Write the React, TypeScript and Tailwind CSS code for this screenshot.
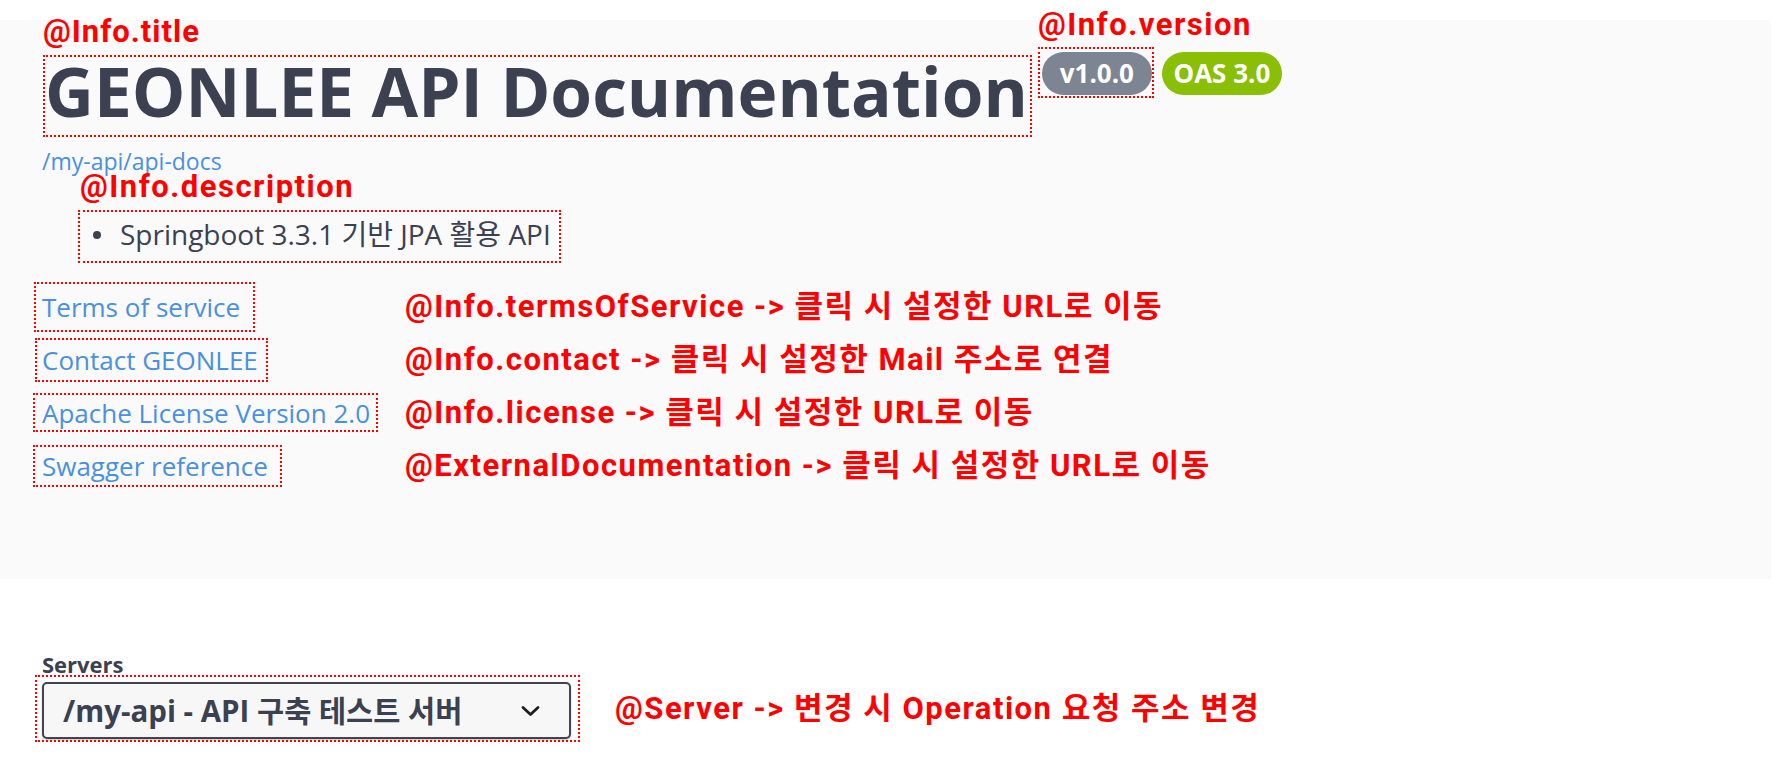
import React from "react";

const red =
  "font-[family-name:'Roboto','Noto_Sans_CJK_KR',sans-serif] font-bold text-[31px] leading-[26px] tracking-[1.5px] text-[#ff0000] whitespace-nowrap";

const links = [
  {
    text: "Terms of service",
    box: "h-[50px] ml-0 pl-[6px] pr-[13px]",
    note: "@Info.termsOfService -> 클릭 시 설정한 URL로 이동",
  },
  {
    text: "Contact GEONLEE",
    box: "h-[44px] ml-[1px] pl-[5px] pr-[8px]",
    note: "@Info.contact -> 클릭 시 설정한 Mail 주소로 연결",
  },
  {
    text: "Apache License Version 2.0",
    box: "h-[39px] -ml-[1px] pl-[7px] pr-[6px]",
    note: "@Info.license -> 클릭 시 설정한 URL로 이동",
  },
  {
    text: "Swagger reference",
    box: "h-[42px] -ml-[1px] pl-[7px] pr-[12px]",
    note: "@ExternalDocumentation -> 클릭 시 설정한 URL로 이동",
  },
];

export default function App() {
  return (
    <div className="h-[758px] w-full overflow-hidden bg-white pt-[20px] font-[family-name:'Open_Sans','Noto_Sans_CJK_KR',sans-serif] text-[#3b4151]">
      <section className="w-[1771px] bg-[#fafafa] pl-[42px] pt-[35px] pb-[87px]">
        <div className="flex items-start">
          <div className="relative ml-[1px] border-2 border-dotted border-[#ff0000] pr-[2px]">
            <span className={`absolute bottom-full left-[-2px] mb-[12px] tracking-[1px] ${red}`}>@Info.title</span>
            <h1 className="whitespace-nowrap pb-[10px] text-[67.5px] font-bold leading-[68px] text-[#3b4151]">
              GEONLEE API Documentation
            </h1>
          </div>
          <div className="relative ml-[6px] -mt-[8px] border-2 border-dotted border-[#ff0000] pl-[2px] pt-[3px] pb-[1px]">
            <span className={`absolute bottom-full left-[-2px] mb-[11px] ${red}`}>@Info.version</span>
            <span className="flex h-[43px] w-[110px] items-center justify-center rounded-full bg-[#7d8492] text-[26px] font-bold text-white">
              v1.0.0
            </span>
          </div>
          <span className="ml-[8px] -mt-[3px] flex h-[43px] w-[120px] items-center justify-center rounded-full bg-[#89bf04] text-[26px] font-bold text-white">
            OAS 3.0
          </span>
        </div>

        <a className="mt-[13px] block w-fit text-[23px] leading-[22px] text-[#4990e2]">/my-api/api-docs</a>

        <div className={`ml-[38px] mt-[2px] w-fit ${red}`}>@Info.description</div>

        <div className="ml-[36px] mt-[10px] flex h-[53px] w-fit items-center gap-[19px] border-2 border-dotted border-[#ff0000] pb-[4px] pl-[13px] pr-[8px]">
          <span className="h-[8px] w-[8px] rounded-full bg-[#3b4151]" />
          <span className="whitespace-nowrap text-[28px] leading-[45px] text-[#3b4151]">
            Springboot 3.3.1 기반 JPA 활용 API
          </span>
        </div>

        <div className="-ml-[8px] mt-[17px] flex flex-col">
          {links.map((l) => (
            <div key={l.text} className="grid h-[53px] grid-cols-[371px_auto] items-center">
              <div className={`flex w-fit items-center border-2 border-dotted border-[#ff0000] ${l.box}`}>
                <a className="whitespace-nowrap text-[26px] leading-[30px] text-[#4990e2]">{l.text}</a>
              </div>
              <span className={red}>{l.note}</span>
            </div>
          ))}
        </div>
      </section>

      <section className="pl-[42px] pt-[74px]">
        <div className="text-[22px] font-bold leading-[22px] text-[#3b4151]">Servers</div>
        <div className="flex items-center">
          <div className="-ml-[7px] border-2 border-dotted border-[#ff0000] pt-[5px] pl-[5px] pr-[7px] pb-[1px]">
            <div className="flex h-[57px] w-[529px] items-center justify-between rounded-[5px] border-2 border-[#41444e] bg-[#f7f7f7] pl-[19px] pr-[29px] shadow-[0_1px_2px_rgba(0,0,0,0.25)]">
              <span className="whitespace-nowrap text-[29.5px] font-bold leading-[36px] text-[#3b4151]">
                /my-api - API 구축 테스트 서버
              </span>
              <svg width="19" height="12" viewBox="0 0 19 12" fill="none">
                <path d="M2 2.5 L9.5 9.5 L17 2.5" stroke="#1f1f1f" strokeWidth="2.8" strokeLinecap="round" strokeLinejoin="round" />
              </svg>
            </div>
          </div>
          <span className={`ml-[35px] ${red}`}>@Server -&gt; 변경 시 Operation 요청 주소 변경</span>
        </div>
      </section>
    </div>
  );
}
